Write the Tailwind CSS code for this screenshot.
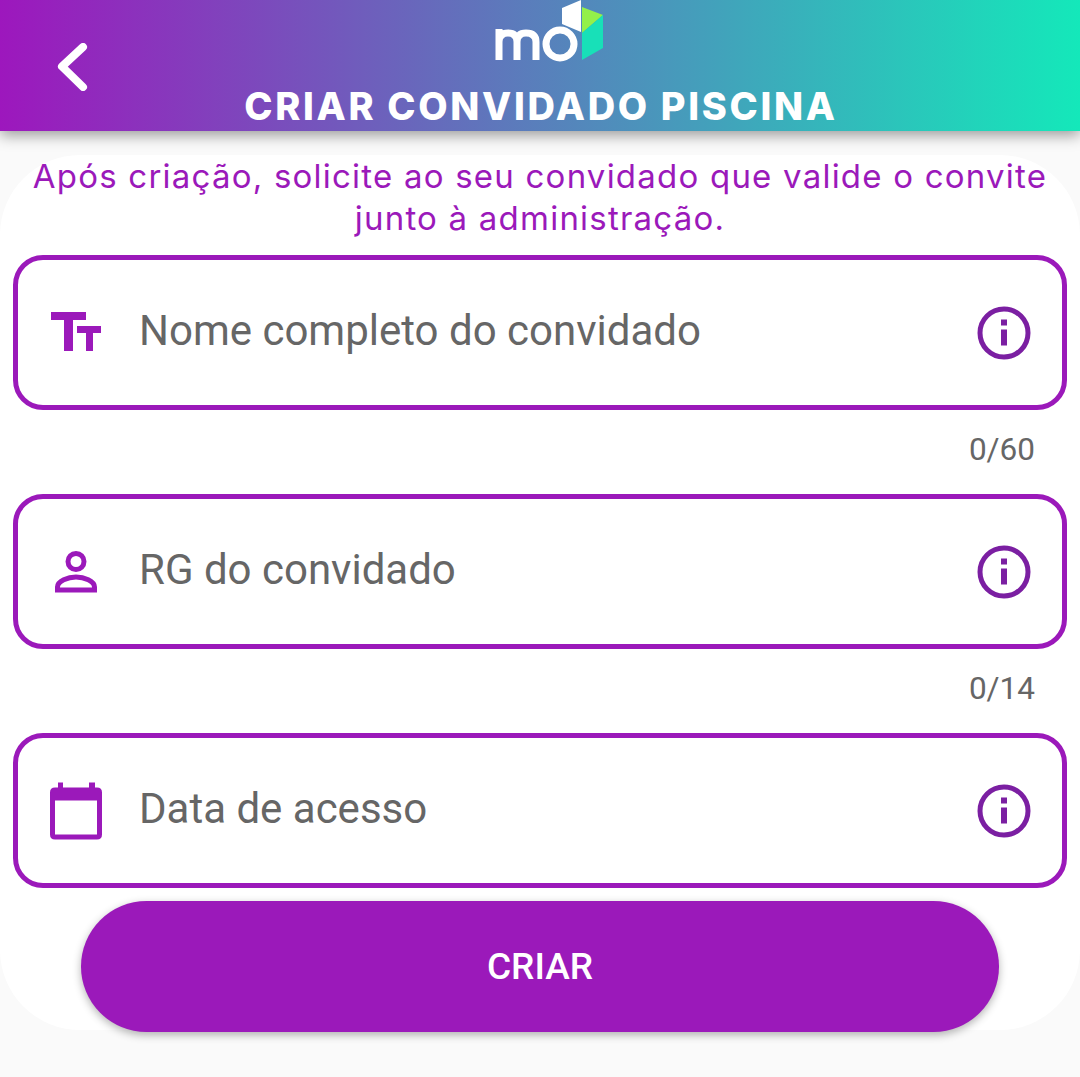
<!DOCTYPE html>
<html lang="pt-BR">
<head>
    <meta charset="UTF-8">
    <meta name="viewport" content="width=device-width, initial-scale=1.0">
    <script src="https://cdn.jsdelivr.net/npm/@tailwindcss/browser@4"></script>
    <title>Criar convidado piscina</title>
</head>
<body class="bg-[#fafafa] font-['Roboto',sans-serif] w-[1080px] h-[1077px] overflow-hidden">

    <header class="relative z-10 h-[131px] bg-linear-to-r/srgb from-[#9d17bd] to-[#14e8ba] grid grid-cols-[1fr_auto_1fr] shadow-[0_4px_14px_rgba(0,0,0,0.4)]">
        <div class="pl-[56px] pt-[43px]">
            <svg width="32" height="48" viewBox="0 0 32 48" fill="none" stroke="#fff" stroke-width="8" stroke-linecap="round" stroke-linejoin="round"><path d="M27 4 L6 23.500 L27 44"/></svg>
        </div>
        <div class="flex flex-col items-center">
            <svg width="115" height="62" viewBox="0 0 115 62" class="ml-[15px]">
                <path d="M72 8 L91 0 L91 32 L72 24 Z" fill="#fff"/>
                <path d="M92 7 L113 15 L92 33 Z" fill="#93f04a"/>
                <path d="M92 33 L113 15 L113 48 L92 60 Z" fill="#18e0b8"/>
                <g fill="none" stroke="#fff" stroke-width="7">
                    <path d="M9 60 V29 M9 42 Q9 33 18 33 Q27 33 27 42 V60 M27 42 Q27 33 36 33 Q46 33 46 42 V60"/>
                    <circle cx="70" cy="44" r="14"/>
                </g>
            </svg>
            <h1 class="mt-[22px] ml-[2px] font-['Inter',sans-serif] font-extrabold text-white text-[38px] leading-[44px] tracking-[0.07em] whitespace-nowrap">CRIAR CONVIDADO PISCINA</h1>
        </div>
        <div></div>
    </header>

    <main class="mt-[26px] h-[875px] bg-white rounded-[80px] px-[13px]">
        <p class="-mt-[2px] font-['Inter',sans-serif] text-[#9b19ba] text-[33px] leading-[42px] tracking-[0.037em] text-center whitespace-nowrap">Após criação, solicite ao seu convidado que valide o convite<br>junto à administração.</p>

        <div class="mt-[16px] flex flex-col">
            <div class="h-[155px] border-[5px] border-[#9b19ba] rounded-[30px] flex items-center pl-[32px] pr-[31px]">
                <svg width="52" height="44" viewBox="0 0 52 44" class="shrink-0" fill="#9b19ba"><path d="M1 1 H36 V9 H23 V40 H14 V9 H1 Z"/><path d="M27 15 H51 V22 H43 V40 H36 V22 H27 Z"/></svg>
                <span class="ml-[37px] text-[42px] leading-[50px] text-[#666] -mt-[3px]">Nome completo do convidado</span>
                <svg width="54" height="54" viewBox="0 0 54 54" class="ml-auto shrink-0" fill="none"><circle cx="27" cy="27" r="24" stroke="#7b1fa2" stroke-width="5"/><rect x="24" y="13.500" width="6" height="6" fill="#7b1fa2"/><rect x="24" y="23.500" width="6" height="16" fill="#7b1fa2"/></svg>
            </div>
            <p class="h-[84px] pt-[20px] pr-[32px] text-right text-[31.500px] leading-[40px] text-[#666]">0/60</p>

            <div class="h-[155px] border-[5px] border-[#9b19ba] rounded-[30px] flex items-center pl-[32px] pr-[31px]">
                <svg width="52" height="44" viewBox="0 0 52 44" class="shrink-0" fill="none" stroke="#9b19ba" stroke-width="5"><circle cx="26" cy="11.500" r="8"/><path d="M7.500 40 V37 C7.500 31 18 27 26 27 C34 27 44.500 31 44.500 37 V40 Z"/></svg>
                <span class="ml-[37px] text-[42px] leading-[50px] text-[#666] -mt-[3px]">RG do convidado</span>
                <svg width="54" height="54" viewBox="0 0 54 54" class="ml-auto shrink-0" fill="none"><circle cx="27" cy="27" r="24" stroke="#7b1fa2" stroke-width="5"/><rect x="24" y="13.500" width="6" height="6" fill="#7b1fa2"/><rect x="24" y="23.500" width="6" height="16" fill="#7b1fa2"/></svg>
            </div>
            <p class="h-[84px] pt-[20px] pr-[32px] text-right text-[31.500px] leading-[40px] text-[#666]">0/14</p>

            <div class="h-[155px] border-[5px] border-[#9b19ba] rounded-[30px] flex items-center pl-[32px] pr-[31px]">
                <svg width="52" height="60" viewBox="0 0 52 60" class="shrink-0" fill="#9b19ba"><path d="M8 1.500 H13 V6.500 H39 V1.500 H45 V6.500 H47 Q52 6.500 52 11.500 V53.500 Q52 58.500 47 58.500 H5 Q0 58.500 0 53.500 V11.500 Q0 6.500 5 6.500 H8 Z M5 19.500 V53.500 H47 V19.500 Z" fill-rule="evenodd"/></svg>
                <span class="ml-[37px] text-[42px] leading-[50px] text-[#666] -mt-[3px]">Data de acesso</span>
                <svg width="54" height="54" viewBox="0 0 54 54" class="ml-auto shrink-0" fill="none"><circle cx="27" cy="27" r="24" stroke="#7b1fa2" stroke-width="5"/><rect x="24" y="13.500" width="6" height="6" fill="#7b1fa2"/><rect x="24" y="23.500" width="6" height="16" fill="#7b1fa2"/></svg>
            </div>
        </div>

        <button class="block mx-auto mt-[13px] w-[918px] h-[131px] rounded-full bg-[#9b19ba] text-white text-[37px] font-medium shadow-[0_3px_8px_rgba(0,0,0,0.3)]">CRIAR</button>
    </main>

</body>
</html>
